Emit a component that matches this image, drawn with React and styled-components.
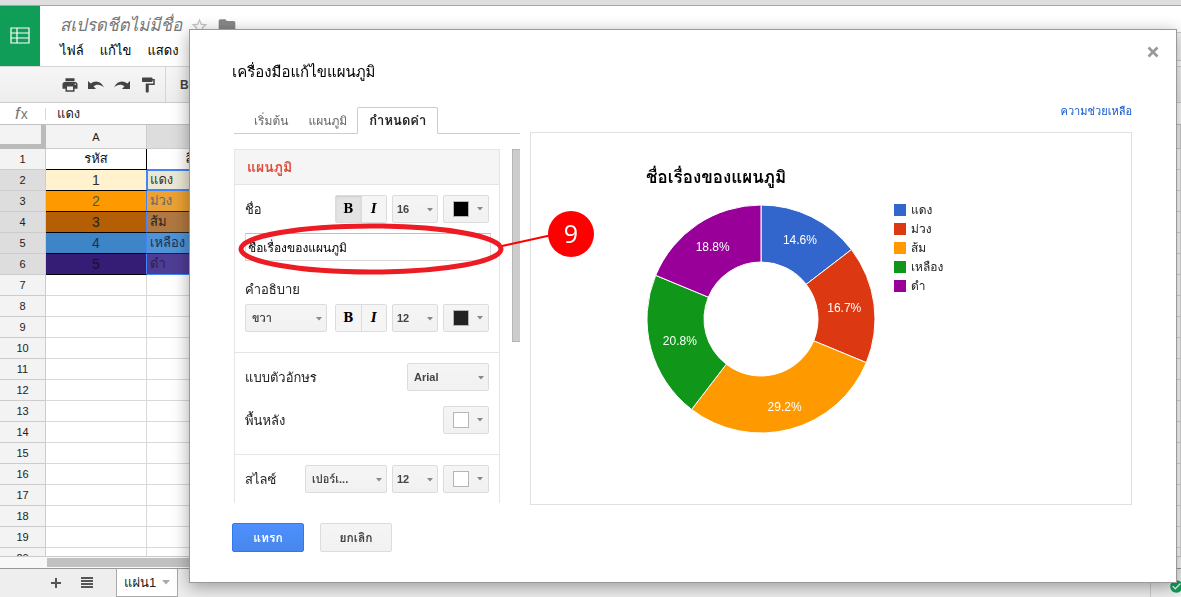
import React from 'react'
import styled, { createGlobalStyle } from 'styled-components'
import {
    MdPrint,
    MdFormatPaint,
    MdStarBorder,
    MdFolder,
    MdCheckCircle,
} from 'react-icons/md'

const ROWS = [
    { a: 'รหัส', b: 'สีผ้า', head: true },
    { a: '1', b: 'แดง', bg: '#fff2cc', bg2: '#ebe7d5', color: '#333', color2: '#333' },
    { a: '2', b: 'ม่วง', bg: '#ff9900', bg2: '#eba133', color: '#4c5a50', color2: '#5a6a70' },
    { a: '3', b: 'ส้ม', bg: '#b45f06', bg2: '#b07840', color: '#222', color2: '#222' },
    { a: '4', b: 'เหลือง', bg: '#3d85c6', bg2: '#4f93d6', color: '#1b2f4f', color2: '#1b2f4f' },
    { a: '5', b: 'ดำ', bg: '#351c75', bg2: '#4e3d94', color: '#16102c', color2: '#2a2150' },
]

// r is the distance of the label from the centre
const SLICES = [
    { name: 'แดง', count: 7, label: '14.6%', color: '#3366cc', r: 88 },
    { name: 'ม่วง', count: 8, label: '16.7%', color: '#dc3912', r: 84 },
    { name: 'ส้ม', count: 14, label: '29.2%', color: '#ff9900', r: 91 },
    { name: 'เหลือง', count: 10, label: '20.8%', color: '#109618', r: 84 },
    { name: 'ดำ', count: 9, label: '18.8%', color: '#990099', r: 87 },
]

const CX = 230
const CY = 186

function point(radius, turn) {
    const a = turn * 2 * Math.PI
    return [CX + radius * Math.sin(a), CY - radius * Math.cos(a)]
}

function Donut() {
    const total = SLICES.reduce((sum, s) => sum + s.count, 0)
    let start = 0
    const parts = SLICES.map((s) => {
        const from = start / total
        const to = (start + s.count) / total
        start += s.count
        const d = [
            'M', point(114, from),
            'A 114 114 0 0 1', point(114, to),
            'L', point(57, to),
            'A 57 57 0 0 0', point(57, from),
            'Z',
        ].join(' ')
        return { ...s, d, mid: point(s.r, (from + to) / 2) }
    })
    return (
        <ChartSvg viewBox="0 0 600 371" width="600" height="371" role="img">
            <text x="115" y="50" className="title">ชื่อเรื่องของแผนภูมิ</text>
            {parts.map((p) => (
                <g key={p.name}>
                    <path d={p.d} fill={p.color} stroke="#fff" />
                    <text x={p.mid[0]} y={p.mid[1] + 4} className="percent">{p.label}</text>
                </g>
            ))}
            {parts.map((p, i) => (
                <g key={p.name}>
                    <rect x="363" y={71 + i * 19} width="12" height="12" fill={p.color} />
                    <text x="380" y={81 + i * 19} className="legend">{p.name}</text>
                </g>
            ))}
        </ChartSvg>
    )
}

function Arrow() {
    return (
        <svg width="6" height="4" viewBox="0 0 6 4" aria-hidden="true">
            <path d="M0 0h6L3 3.5z" fill="#888" />
        </svg>
    )
}

function UndoIcon({ flip }) {
    return (
        <svg width="18" height="18" viewBox="0 0 18 18" fill="currentColor">
            <g transform={flip ? 'matrix(-1 0 0 1 18 0)' : undefined}>
                <path d="M1 5v8h8L6.500 10.300C9 8 13.500 7.800 17 11.500 14.500 5 8 3.800 3.700 7.500z" />
            </g>
        </svg>
    )
}

function Dropdown({ label, value, wide }) {
    return (
        <SelectBox $wide={wide}>
            <select aria-label={label} defaultValue={value}>
                <option>{value}</option>
            </select>
            <Arrow />
        </SelectBox>
    )
}

function ColorPicker({ label, color }) {
    return (
        <ColorButton type="button" aria-label={label}>
            <Swatch $color={color} />
            <Arrow />
        </ColorButton>
    )
}

function StyleButtons({ bold }) {
    return (
        <ButtonGroup>
            <StyleButton type="button" $active={bold}>B</StyleButton>
            <StyleButton type="button" $italic>I</StyleButton>
        </ButtonGroup>
    )
}

function Sheet() {
    const empty = Array.from({ length: 14 }, (_, i) => i + 7)
    return (
        <SheetPage>
            <TopStrip />
            <Header>
                <Logo>
                    <svg width="20" height="17" viewBox="0 0 20 17" fill="none" stroke="#fff" strokeWidth="1.2">
                        <path d="M1 1h18v15H1zM1 6h18M1 11h18M7 1v15" />
                    </svg>
                </Logo>
                <HeaderText>
                    <TitleLine>
                        <DocTitle>สเปรดชีตไม่มีชื่อ</DocTitle>
                        <MdStarBorder size={19} color="#c4c4c4" />
                        <MdFolder size={20} color="#888" />
                    </TitleLine>
                    <Menu>
                        <button type="button">ไฟล์</button>
                        <button type="button">แก้ไข</button>
                        <button type="button">แสดง</button>
                    </Menu>
                </HeaderText>
                <CommentButton type="button">ความคิดเห็น</CommentButton>
            </Header>
            <Toolbar>
                <button type="button" aria-label="พิมพ์"><MdPrint size={18} /></button>
                <button type="button" aria-label="เลิกทำ"><UndoIcon /></button>
                <button type="button" aria-label="ทำซ้ำ"><UndoIcon flip /></button>
                <button type="button" aria-label="คัดลอกรูปแบบ"><MdFormatPaint size={18} /></button>
                <ToolDivider />
                <button type="button">B</button>
            </Toolbar>
            <FormulaBar>
                <Fx><i>f</i>x</Fx>
                <span>แดง</span>
            </FormulaBar>
            <GridArea>
                <Grid>
                    <colgroup>
                        <col className="numbers" />
                        <col className="cells" />
                        <col className="cells" />
                        <col />
                    </colgroup>
                    <thead>
                        <tr>
                            <Corner />
                            <ColHead>A</ColHead>
                            <ColHead $selected>B</ColHead>
                            <ColHead />
                        </tr>
                    </thead>
                    <tbody>
                        {ROWS.map((row, i) => (
                            <tr key={row.a}>
                                <RowHead $selected={!row.head}>{i + 1}</RowHead>
                                <Cell
                                    $bg={row.bg}
                                    $color={row.color}
                                    $line="#000"
                                    $side={row.head ? '#000' : '#4285f4'}
                                    $number={!row.head}
                                >
                                    {row.a}
                                </Cell>
                                <Cell
                                    $bg={row.bg2}
                                    $color={row.color2}
                                    $left={!row.head}
                                    $line={i === 0 || i === 1 || i === 5 ? '#4285f4' : '#222'}
                                    $active={i === 1}
                                >
                                    {row.b}
                                </Cell>
                                <Cell />
                            </tr>
                        ))}
                        {empty.map((n) => (
                            <tr key={n}>
                                <RowHead>{n}</RowHead>
                                <Cell />
                                <Cell />
                                <Cell />
                            </tr>
                        ))}
                    </tbody>
                </Grid>
            </GridArea>
            <ScrollRow><div /></ScrollRow>
            <SheetTabs>
                <button type="button" aria-label="เพิ่มแผ่นงาน">
                    <svg width="18" height="18" viewBox="0 0 18 18" fill="#555">
                        <path d="M8 4h2v4h4v2h-4v4H8v-4H4V8h4z" />
                    </svg>
                </button>
                <button type="button" aria-label="แผ่นงานทั้งหมด">
                    <svg width="12" height="12" viewBox="0 0 12 12" fill="#555">
                        <path d="M0 0h12v2H0zM0 3h12v2H0zM0 6h12v2H0zM0 9h12v2H0z" />
                    </svg>
                </button>
                <SheetTab type="button">
                    แผ่น1
                    <svg width="8" height="5" viewBox="0 0 8 5" fill="#aaa"><path d="M0 0h8L4 4.500z" /></svg>
                </SheetTab>
                <Status><MdCheckCircle size={15} color="#0f9d58" /></Status>
            </SheetTabs>
        </SheetPage>
    )
}

function ChartEditor() {
    return (
        <Dialog role="dialog" aria-labelledby="editor-title">
            <CloseButton type="button" aria-label="ปิด">
                <svg width="18" height="18" viewBox="0 0 18 18" fill="none" stroke="#999" strokeWidth="2.6">
                    <path d="M4.500 4.500l9 9M13.500 4.500l-9 9" />
                </svg>
            </CloseButton>
            <DialogTitle id="editor-title">เครื่องมือแก้ไขแผนภูมิ</DialogTitle>
            <DialogBody>
                <Left>
                    <Tabs role="tablist">
                        <Tab type="button" role="tab">เริ่มต้น</Tab>
                        <Tab type="button" role="tab">แผนภูมิ</Tab>
                        <Tab type="button" role="tab" $active>กำหนดค่า</Tab>
                    </Tabs>
                    <Scroller>
                        <Panel>
                            <PanelTitle>แผนภูมิ</PanelTitle>
                            <Section>
                                <Row>
                                    <Label htmlFor="chart-name">ชื่อ</Label>
                                    <StyleButtons bold />
                                    <Dropdown label="ขนาดชื่อ" value="16" />
                                    <ColorPicker label="สีชื่อ" color="#000" />
                                </Row>
                                <NameInput id="chart-name" type="text" defaultValue="ชื่อเรื่องของแผนภูมิ" />
                                <Caption>คำอธิบาย</Caption>
                                <Row>
                                    <Grow>
                                        <Dropdown label="คำอธิบาย" value="ขวา" wide />
                                    </Grow>
                                    <StyleButtons />
                                    <Dropdown label="ขนาดคำอธิบาย" value="12" />
                                    <ColorPicker label="สีคำอธิบาย" color="#222" />
                                </Row>
                            </Section>
                            <Section>
                                <Row>
                                    <Label as="span">แบบตัวอักษร</Label>
                                    <Dropdown label="แบบตัวอักษร" value="Arial" wide />
                                </Row>
                                <Row $gap>
                                    <Label as="span">พื้นหลัง</Label>
                                    <ColorPicker label="พื้นหลัง" color="#fff" />
                                </Row>
                            </Section>
                            <Section>
                                <Row>
                                    <Label as="span">สไลซ์</Label>
                                    <Dropdown label="สไลซ์" value="เปอร์เ..." wide />
                                    <Dropdown label="ขนาดสไลซ์" value="12" />
                                    <ColorPicker label="สีสไลซ์" color="#fff" />
                                </Row>
                            </Section>
                        </Panel>
                        <Thumb />
                    </Scroller>
                </Left>
                <Right>
                    <HelpLink href="#help">ความช่วยเหลือ</HelpLink>
                    <Preview><Donut /></Preview>
                </Right>
            </DialogBody>
            <Actions>
                <ActionButton type="button" $primary>แทรก</ActionButton>
                <ActionButton type="button">ยกเลิก</ActionButton>
            </Actions>
            <Callout width="365" height="80" viewBox="235 200 365 80">
                <ellipse cx="371" cy="249" rx="130" ry="23" fill="none" stroke="#ed1c24" strokeWidth="5" />
                <path d="M502 246l50-11" stroke="#f00" strokeWidth="2" />
                <circle cx="571" cy="234" r="23" fill="#f00" />
                <text x="571" y="243">9</text>
            </Callout>
        </Dialog>
    )
}

export default function App() {
    return (
        <>
            <GlobalStyle />
            <Sheet />
            <Overlay>
                <ChartEditor />
            </Overlay>
        </>
    )
}

const GlobalStyle = createGlobalStyle`
    * {
        box-sizing: border-box;
    }
    body {
        margin: 0;
        overflow: hidden;
        font-family: "Liberation Sans", Tahoma, Loma, Waree, "Noto Sans Thai Looped", "Noto Sans Thai", sans-serif;
        font-size: 13px;
        color: #222;
    }
    button, input, select {
        font: inherit;
        color: inherit;
    }
    button {
        padding: 0;
        border: 0;
        background: none;
        cursor: pointer;
    }
`

const SheetPage = styled.div`
    display: flex;
    flex-direction: column;
    height: 100vh;
    background: #fff;
`
const TopStrip = styled.div`
    flex: none;
    height: 6px;
    background: #dedede;
    border-bottom: 1px solid #a5a5a5;
`
const Header = styled.header`
    display: flex;
    flex: none;
    height: 61px;
    border-bottom: 1px solid #d5d5d5;
`
const Logo = styled.div`
    display: flex;
    align-items: center;
    justify-content: center;
    width: 40px;
    padding-bottom: 2px;
    background: #0f9d58;
`
const HeaderText = styled.div`
    flex: 1;
    padding: 8px 0 0 20px;
`
const TitleLine = styled.div`
    display: flex;
    align-items: center;
    gap: 8px;
    height: 24px;
`
const DocTitle = styled.span`
    font-size: 17px;
    font-style: italic;
    line-height: 24px;
    color: #777;
    white-space: nowrap;
`
const Menu = styled.nav`
    display: flex;
    gap: 16px;
    line-height: 26px;
    color: #000;
`
const CommentButton = styled.button`
    align-self: flex-start;
    height: 29px;
    margin: 26px -4px 0 0;
    padding: 0 8px;
    border: 1px solid #ccc;
    background: #f5f5f5;
`
const Toolbar = styled.div`
    display: flex;
    flex: none;
    align-items: center;
    gap: 8px;
    height: 36px;
    padding-left: 61px;
    background: linear-gradient(#f6f6f6, #ededed);
    border-bottom: 1px solid #ccc;
    color: #444;
    font-size: 12px;
    font-weight: bold;

    svg {
        display: block;
    }
`
const ToolDivider = styled.div`
    align-self: stretch;
    width: 1px;
    margin-right: 6px;
    background: #d5d5d5;
`
const FormulaBar = styled.div`
    display: flex;
    flex: none;
    align-items: center;
    height: 22px;
    border-bottom: 1px solid #c0c0c0;

    span {
        padding-left: 11px;
    }
`
const Fx = styled.div`
    width: 46px;
    padding-left: 15px;
    border-right: 1px solid #c5dcf5;
    font-size: 14px;
    line-height: 12px;
    color: #777;

    i {
        padding-right: 1px;
        font-size: 17px;
    }
`
const GridArea = styled.div`
    flex: 1;
    min-height: 0;
    overflow: hidden;
    border-bottom: 1px solid #ccc;
`
const Grid = styled.table`
    width: 100%;
    table-layout: fixed;
    border-collapse: separate;
    border-spacing: 0;

    .numbers {
        width: 46px;
    }
    .cells {
        width: 101px;
    }
`
const Corner = styled.td`
    background: #f3f3f3;
    border-right: 5px solid #bbb;
    border-bottom: 5px solid #bbb;
`
const ColHead = styled.th`
    height: 24px;
    padding: 0;
    background: ${(p) => (p.$selected ? '#ddd' : '#f3f3f3')};
    border-right: 1px solid #ccc;
    border-bottom: 1px solid #ccc;
    font-size: 11px;
    font-weight: normal;
`
const RowHead = styled.th`
    height: 21px;
    padding: 0;
    background: ${(p) => (p.$selected ? '#ddd' : '#f3f3f3')};
    border-right: 1px solid #ccc;
    border-bottom: 1px solid #ccc;
    font-size: 11px;
    font-weight: normal;
    line-height: 20px;
`
const Cell = styled.td`
    height: 21px;
    padding: 0 3px;
    overflow: hidden;
    background: ${(p) => p.$bg || '#fff'};
    border-right: 1px solid ${(p) => p.$side || '#d9d9d9'};
    border-bottom: 1px solid ${(p) => p.$line || '#d9d9d9'};
    box-shadow: ${(p) => (p.$active ? 'inset 0 0 0 1px #4285f4' : 'none')};
    color: ${(p) => p.$color || '#111'};
    font-size: ${(p) => (p.$number ? '14px' : '13px')};
    line-height: 20px;
    text-align: ${(p) => (p.$left ? 'left' : 'center')};
    white-space: nowrap;
`
const ScrollRow = styled.div`
    flex: none;
    height: 11px;
    padding: 1px 17px 0 47px;
    background: #f8f8f8;

    div {
        height: 9px;
        background: #c1c1c1;
    }
`
const SheetTabs = styled.div`
    display: flex;
    flex: none;
    align-items: center;
    gap: 16px;
    height: 29px;
    padding-left: 47px;
    background: #eee;
    border-top: 1px solid #999;
    color: #555;

    svg {
        display: block;
    }
`
const SheetTab = styled.button`
    display: flex;
    align-items: center;
    justify-content: space-between;
    align-self: flex-start;
    width: 62px;
    height: 28px;
    margin-left: 7px;
    padding: 0 7px;
    background: #fff;
    border: 1px solid #aaa;
    border-top: 0;
    color: #222;
`
const Status = styled.div`
    display: flex;
    align-items: center;
    align-self: stretch;
    width: 31px;
    margin-left: auto;
    padding: 6px 0 0 18px;
    border-left: 1px solid #ccc;

    svg {
        flex: none;
    }
`

const Overlay = styled.div`
    position: fixed;
    inset: 0;
    padding: 29px 4px 0 189px;
`
const Dialog = styled.section`
    position: relative;
    padding: 30px 44px 30px 42px;
    background: #fff;
    border: 1px solid #999;
    box-shadow: 0 4px 16px rgba(0, 0, 0, 0.35);
`
const CloseButton = styled.button`
    position: absolute;
    top: 13px;
    right: 14px;

    svg {
        display: block;
    }
`
const DialogTitle = styled.h1`
    margin: 0 0 17px;
    font-size: 15px;
    font-weight: normal;
    line-height: 24px;
    color: #000;
`
const DialogBody = styled.div`
    display: flex;
    gap: 10px;
`
const Left = styled.div`
    flex: none;
    width: 288px;
    padding: 6px 0 2px 2px;
`
const Tabs = styled.div`
    display: flex;
    height: 27px;
    padding-left: 10px;
    border-bottom: 1px solid #ccc;
`
const Tab = styled.button`
    height: 27px;
    padding: 0 ${(p) => (p.$active ? '11px' : '9px')};
    border: 1px solid ${(p) => (p.$active ? '#ccc' : 'transparent')};
    border-bottom-color: ${(p) => (p.$active ? '#fff' : '#ccc')};
    border-radius: 2px 2px 0 0;
    font-size: ${(p) => (p.$active ? '13px' : '12px')};
    font-weight: ${(p) => (p.$active ? 'bold' : 'normal')};
    color: ${(p) => (p.$active ? '#222' : '#666')};
    white-space: nowrap;
`
const Scroller = styled.div`
    display: flex;
    gap: 12px;
    height: 354px;
    margin-top: 15px;
    overflow: hidden;
`
const Panel = styled.div`
    flex: none;
    width: 266px;
    border: 1px solid #e5e5e5;
    border-bottom: 0;
`
const PanelTitle = styled.h2`
    margin: 0;
    padding-left: 12px;
    background: #f5f5f5;
    font-size: 14px;
    line-height: 34px;
    color: #dd4b39;
`
const Section = styled.div`
    padding: 10px 10px 20px;
    border-top: 1px solid #e5e5e5;
`
const Row = styled.div`
    display: flex;
    align-items: center;
    gap: 5px;
    height: 28px;
    margin-top: ${(p) => (p.$gap ? '15px' : '0')};
`
const Label = styled.label`
    flex: 1;
    white-space: nowrap;
`
const Grow = styled.div`
    flex: 1;
`
const Caption = styled.div`
    margin: 16px 0 2px;
    line-height: 25px;
`
const NameInput = styled.input`
    display: block;
    width: 246px;
    height: 28px;
    margin-top: 10px;
    padding: 0 2px;
    border: 1px solid #d9d9d9;
    border-top-color: #c0c0c0;
    color: #000;
    font-size: 12px;
`
const ButtonGroup = styled.div`
    display: flex;
    flex: none;
    width: 52px;
    border: 1px solid #dcdcdc;
    border-radius: 2px;
`
const StyleButton = styled.button`
    flex: 1;
    height: 26px;
    background: ${(p) => (p.$active ? '#e3e3e3' : '#f5f5f5')};
    box-shadow: ${(p) => (p.$active ? 'inset 0 1px 2px rgba(0, 0, 0, 0.1)' : 'none')};
    color: #000;
    font-family: "DejaVu Serif", serif;
    font-size: 12px;
    font-weight: bold;
    font-style: ${(p) => (p.$italic ? 'italic' : 'normal')};

    & + & {
        border-left: 1px solid #dcdcdc;
    }
`
const SelectBox = styled.div`
    display: grid;
    flex: none;
    align-items: center;
    width: ${(p) => (p.$wide ? '82px' : '46px')};

    select {
        grid-area: 1 / 1;
        width: 100%;
        height: 28px;
        padding: 0 ${(p) => (p.$wide ? '6px' : '4px')};
        appearance: none;
        border: 1px solid #dcdcdc;
        border-radius: 2px;
        background: linear-gradient(#f5f5f5, #f1f1f1);
        color: #444;
        font-size: 11px;
        font-weight: bold;
    }
    svg {
        grid-area: 1 / 1;
        justify-self: end;
        margin: 1px 5px 0 0;
        pointer-events: none;
    }
`
const ColorButton = styled.button`
    display: flex;
    flex: none;
    align-items: center;
    justify-content: space-between;
    width: 46px;
    height: 28px;
    padding: 0 5px 0 9px;
    border: 1px solid #dcdcdc;
    border-radius: 2px;
    background: linear-gradient(#f5f5f5, #f1f1f1);
`
const Swatch = styled.span`
    width: 16px;
    height: 16px;
    border: 1px solid #b5b5b5;
    background: ${(p) => p.$color};
`
const Thumb = styled.div`
    flex: none;
    width: 9px;
    height: 193px;
    border: 1px solid #b5b5b5;
    border-right-color: #ccc;
    background: #ccc;
`
const Right = styled.div`
    display: flex;
    flex: 1;
    flex-direction: column;
    min-width: 0;
`
const HelpLink = styled.a`
    align-self: flex-end;
    margin-bottom: 11px;
    font-size: 11px;
    line-height: 20px;
    color: #1155cc;
    text-decoration: none;
`
const Preview = styled.div`
    flex: 1;
    overflow: hidden;
    border: 1px solid #e0e0e0;
`
const ChartSvg = styled.svg`
    display: block;

    .title {
        font-size: 17px;
        font-weight: bold;
        fill: #000;
    }
    .percent {
        font-size: 12px;
        fill: #fff;
        text-anchor: middle;
    }
    .legend {
        font-size: 12px;
        fill: #222;
    }
`
const Actions = styled.div`
    display: flex;
    gap: 16px;
    margin-top: 18px;
`
const ActionButton = styled.button`
    width: 72px;
    height: 29px;
    border: 1px solid ${(p) => (p.$primary ? '#3079ed' : '#dcdcdc')};
    border-radius: 2px;
    background: ${(p) => (p.$primary ? 'linear-gradient(#4d90fe, #4787ed)' : 'linear-gradient(#f5f5f5, #f1f1f1)')};
    color: ${(p) => (p.$primary ? '#fff' : '#444')};
    font-size: 12px;
    font-weight: bold;
`
const Callout = styled.svg`
    position: absolute;
    top: 170px;
    left: 45px;
    pointer-events: none;

    text {
        fill: #fff;
        font-family: "Open Sans", sans-serif;
        font-size: 25px;
        text-anchor: middle;
    }
`
